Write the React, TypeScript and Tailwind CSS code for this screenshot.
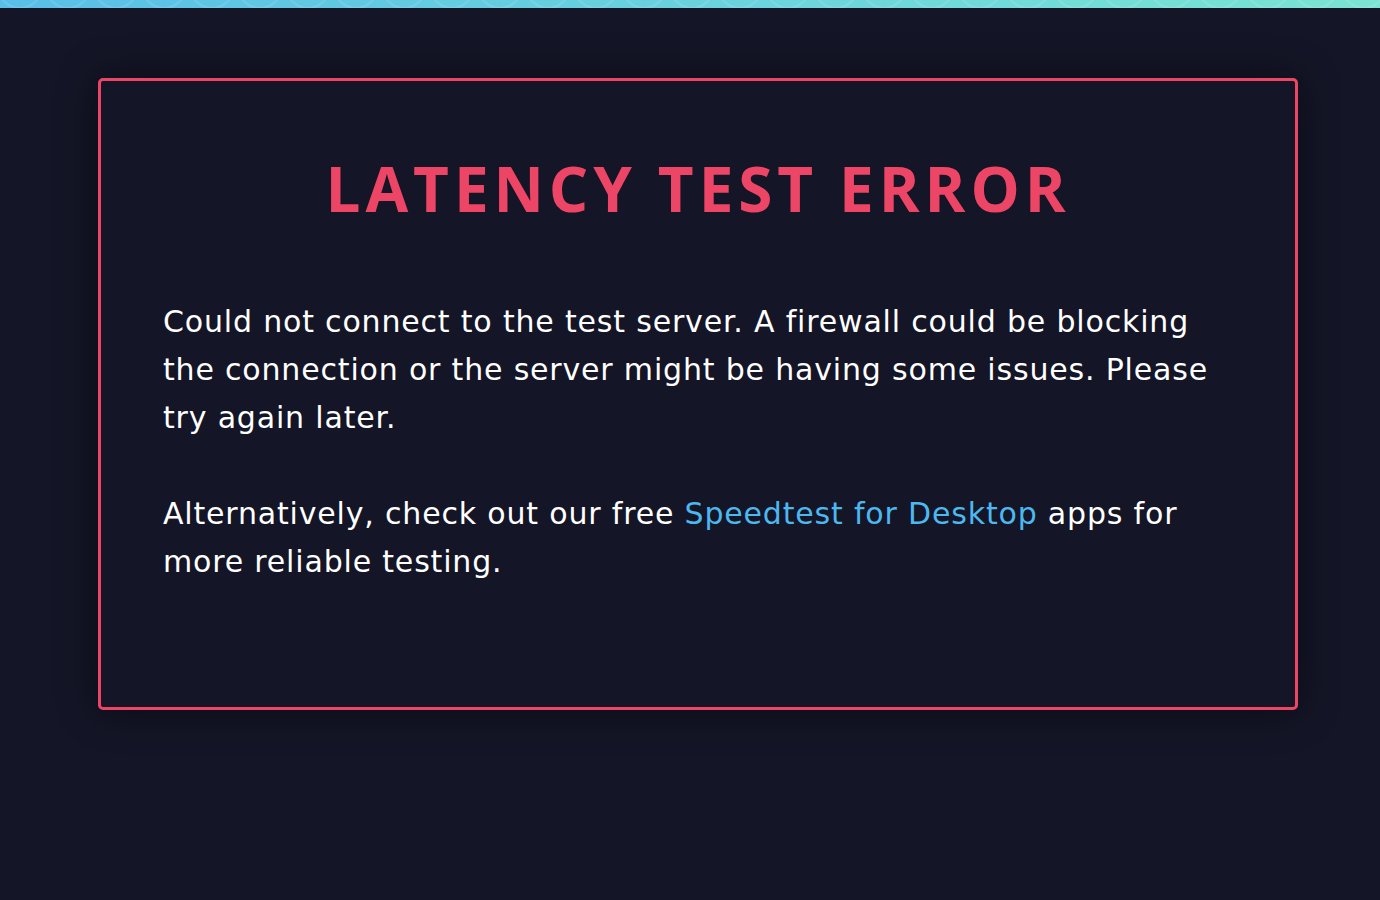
import React from "react";

function TopBar() {
  const circles = [];
  for (let i = 0; i < 30; i++) {
    circles.push(
      <circle key={i} cx={i * 48 + 20} cy={-14} r={22} fill="none" stroke="rgba(255,255,255,0.12)" strokeWidth={2} />
    );
  }
  return (
    <div className="relative h-2 w-full overflow-hidden bg-gradient-to-r from-[#5abfe7] to-[#7be4d2]">
      <svg className="absolute inset-0" width="1380" height="8" viewBox="0 0 1380 8">
        {circles}
      </svg>
    </div>
  );
}

export default function App() {
  return (
    <div className="min-h-[900px] w-full bg-[#141526]">
      <TopBar />
      <div className="pl-[98px] pt-[70px]">
        <div className="h-[632px] w-[1200px] rounded-[5px] border-[3px] border-[#ec4565] bg-[#141526] shadow-[0_0_40px_rgba(0,0,0,0.45)] px-[62px] pt-[69px]">
          <h1
            className="text-center text-[62px] font-bold leading-[76px] tracking-[4.9px] text-[#ec4565]"
            style={{ fontFamily: '"Open Sans", "Liberation Sans", sans-serif' }}
          >
            LATENCY TEST ERROR
          </h1>
          <div
            className="mt-[72px] text-[30px] leading-[48px] tracking-[0.82px] text-white"
            style={{ fontFamily: '"DejaVu Sans", "Open Sans", sans-serif' }}
          >
            <p>
              Could not connect to the test server. A firewall could be blocking the connection or the server might be having some issues. Please try again later.
            </p>
            <p className="mt-[48px]">
              Alternatively, check out our free <span className="text-[#4db8ef]">Speedtest for Desktop</span> apps for more reliable testing.
            </p>
          </div>
        </div>
      </div>
    </div>
  );
}
